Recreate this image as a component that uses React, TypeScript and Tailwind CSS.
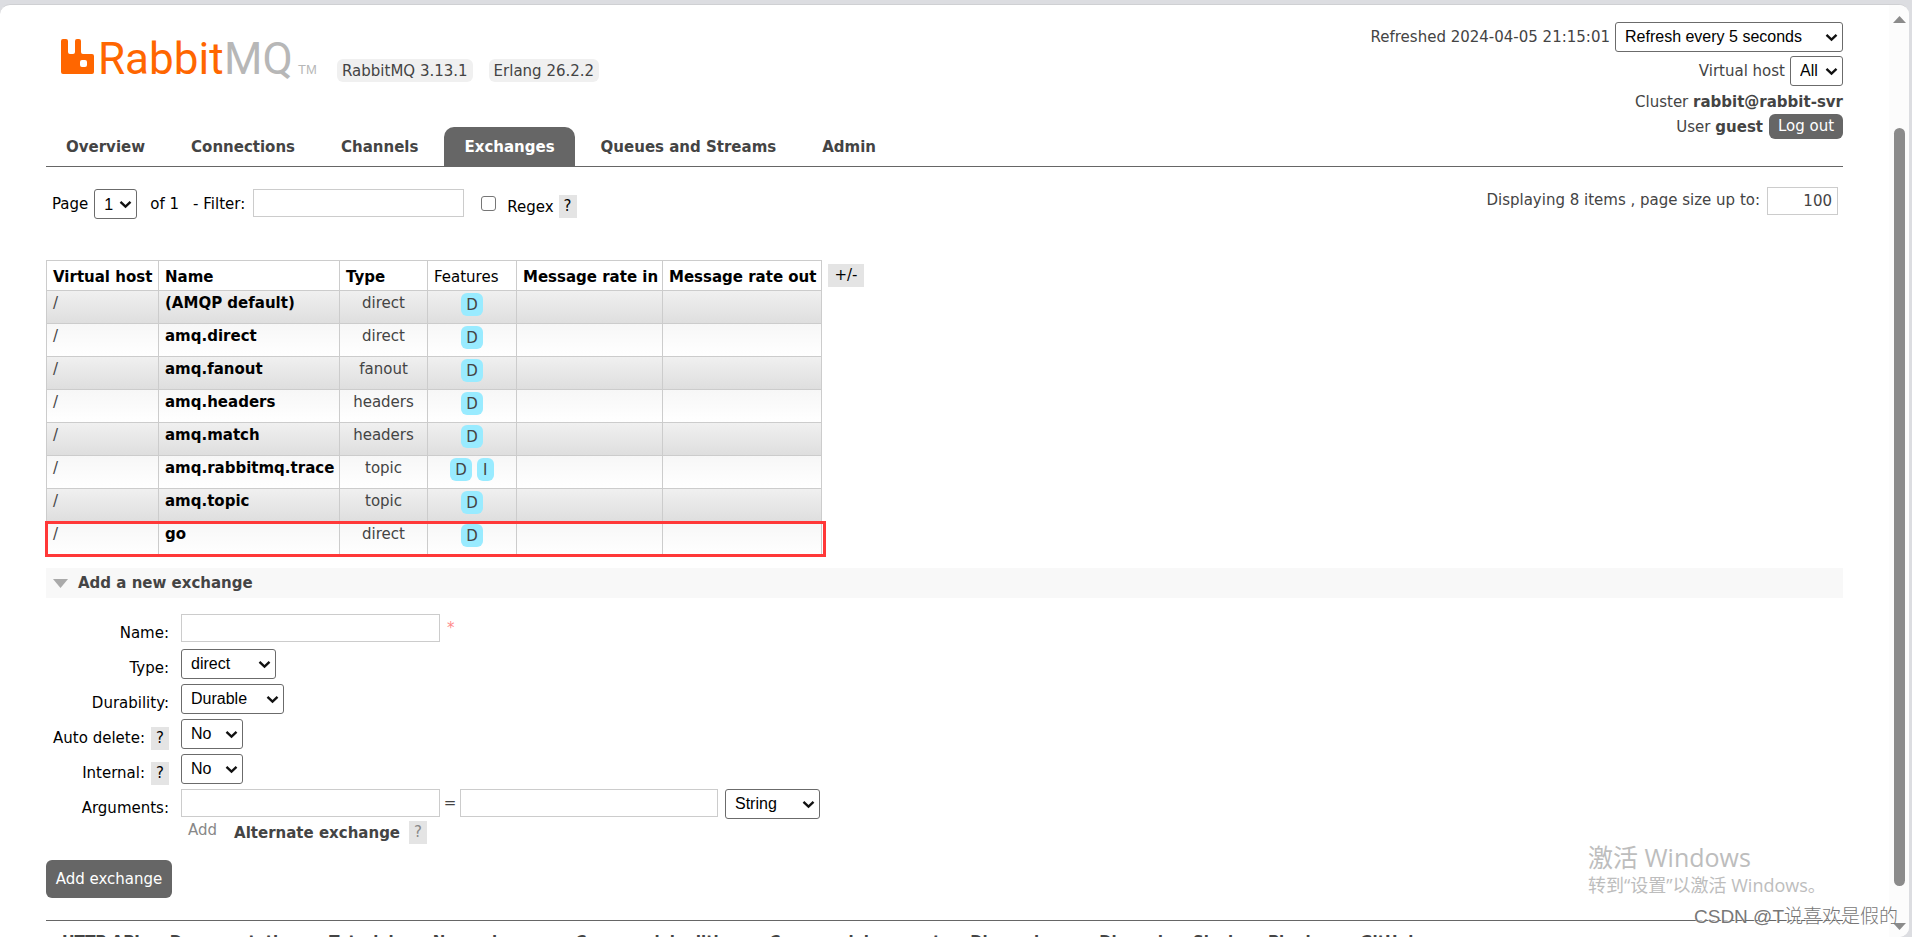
import { ComponentProps, ReactNode } from "react";

const tabs = [
  "Overview",
  "Connections",
  "Channels",
  "Exchanges",
  "Queues and Streams",
  "Admin",
];

const exchanges = [
  { name: "(AMQP default)", type: "direct", features: ["D"] },
  { name: "amq.direct", type: "direct", features: ["D"] },
  { name: "amq.fanout", type: "fanout", features: ["D"] },
  { name: "amq.headers", type: "headers", features: ["D"] },
  { name: "amq.match", type: "headers", features: ["D"] },
  { name: "amq.rabbitmq.trace", type: "topic", features: ["D", "I"] },
  { name: "amq.topic", type: "topic", features: ["D"] },
  { name: "go", type: "direct", features: ["D"] },
];

const footerLinks = [
  "HTTP API",
  "Documentation",
  "Tutorials",
  "New releases",
  "Commercial edition",
  "Commercial support",
  "Discussions",
  "Discord",
  "Slack",
  "Plugins",
  "GitHub",
];

function Logo() {
  return (
    <svg width="258" height="62" viewBox="0 0 258 62" role="img" aria-label="RabbitMQ">
      <path
        fill="#ff6600"
        fillRule="evenodd"
        d="M2 12H5Q7 12 7 14V25Q7 27 9 27H12Q14 27 14 25V14Q14 12 16 12H18Q20 12 20 14V25Q20 27 22 27H31Q33 27 33 29V45Q33 47 31 47H2Q0 47 0 45V14Q0 12 2 12ZM21 33Q19 33 19 35V38Q19 40 21 40H24Q26 40 26 38V35Q26 33 24 33Z"
      />
      <text y="47" className="font-['Liberation_Sans_Narrow','Roboto'] text-[44px]">
        <tspan x="37" fill="#ff6600">
          Rabbit
        </tspan>
        <tspan x="163" fill="#b7b7b7">
          MQ
        </tspan>
      </text>
      <text x="237" y="47" fill="#b7b7b7" className="font-['Liberation_Sans'] text-[13px]">
        TM
      </text>
    </svg>
  );
}

interface SelectProps extends ComponentProps<"select"> {
  value: string;
}

function Select({ value, className, ...props }: SelectProps) {
  return (
    <span className="relative inline-block align-middle">
      <select
        {...props}
        className={`h-[30px] appearance-none rounded-[3px] border border-[#6b6b6b] bg-white pl-[9px] font-['Liberation_Sans',sans-serif] text-[16px] text-black ${className}`}
      >
        <option>{value}</option>
      </select>
      <svg
        className="pointer-events-none absolute top-[11px] right-[5px]"
        width="13"
        height="9"
        viewBox="0 0 13 9"
        fill="none"
        stroke="#111"
        strokeWidth="2.400"
      >
        <path d="M1.500 1.800 6.500 6.500l5-4.700" />
      </svg>
    </span>
  );
}

function TextInput({ className, ...props }: ComponentProps<"input">) {
  return (
    <input
      type="text"
      {...props}
      className={`h-7 border border-[#ccc] bg-white px-[5px] ${className}`}
    />
  );
}

function Help({ className = "text-black", label }: { className?: string; label: string }) {
  return (
    <button
      aria-label={label}
      className={`h-[23px] w-[18px] bg-[#e4e4e4] text-center leading-[23px] ${className}`}
    >
      ?
    </button>
  );
}

interface FieldProps {
  id: string;
  label: string;
  help?: boolean;
  children: ReactNode;
}

function Field({ id, label, help, children }: FieldProps) {
  return (
    <div className="flex h-[35px] items-start">
      <div className="mr-3 flex w-[123px] shrink-0 items-center justify-end gap-[6px] pt-2 text-black">
        <label htmlFor={id} className="leading-[23px] whitespace-nowrap">
          {label}:
        </label>
        {help && <Help label={`Help on ${label}`} />}
      </div>
      {children}
    </div>
  );
}

function Header() {
  return (
    <header>
      <div className="flex h-[122px] justify-between">
        <div className="flex items-start pt-[22px] pl-[15px]">
          <Logo />
          <div className="ml-[18px] flex gap-4 pt-8 whitespace-nowrap">
            <span className="h-[23px] rounded-md bg-[#f0f0f0] px-[5px] leading-6">
              RabbitMQ 3.13.1
            </span>
            <span className="h-[23px] rounded-md bg-[#f0f0f0] px-[5px] leading-6">
              Erlang 26.2.2
            </span>
          </div>
        </div>
        <ul className="flex flex-col items-end pt-[17px] *:shrink-0">
          <li className="flex h-[34px] items-start gap-[5px]">
            <label htmlFor="refresh" className="leading-[30px]">
              Refreshed 2024-04-05 21:15:01
            </label>
            <Select id="refresh" value="Refresh every 5 seconds" className="w-[228px]" />
          </li>
          <li className="flex h-[34px] items-start gap-[5px]">
            <label htmlFor="vhost" className="leading-[30px]">
              Virtual host
            </label>
            <Select id="vhost" value="All" className="w-[53px]" />
          </li>
          <li className="leading-6">
            Cluster <b>rabbit@rabbit-svr</b>
          </li>
          <li className="flex gap-[6px] leading-[26px]">
            <span>
              User <b>guest</b>
            </span>
            <button className="h-[25px] w-[74px] rounded-md bg-[#666] leading-[25px] text-white">
              Log out
            </button>
          </li>
        </ul>
      </div>
      <nav className="flex gap-[6px] border-b border-[#666] font-bold">
        {tabs.map((tab) => (
          <a
            key={tab}
            href="#"
            className={
              tab === "Exchanges"
                ? "h-[39px] rounded-t-[10px] bg-[#666] px-5 leading-10 text-white"
                : "h-[39px] px-5 leading-10"
            }
          >
            {tab}
          </a>
        ))}
      </nav>
    </header>
  );
}

function FilterBar() {
  return (
    <div className="flex items-start justify-between pt-5 pr-[5px] pl-[6px]">
      <div className="flex pt-[2px] leading-[30px] text-black">
        <label htmlFor="page" className="mr-[6px]">
          Page
        </label>
        <Select id="page" value="1" className="w-[43px]" />
        <span className="ml-[13px]">of 1</span>
        <label htmlFor="filter" className="mr-2 ml-[14px]">
          - Filter:
        </label>
        <TextInput id="filter" className="w-[211px]" />
        <input
          id="regex"
          type="checkbox"
          className="mt-[7px] ml-[17px] h-[15px] w-[15px] appearance-none rounded-[3px] border border-[#767676]"
        />
        <label htmlFor="regex" className="mt-[3px] mr-[5px] ml-[11px]">
          Regex
        </label>
        <div className="pt-[6px] leading-none">
          <Help label="Help on filter" />
        </div>
      </div>
      <div className="flex gap-[7px]">
        <label htmlFor="pagesize" className="leading-[26px]">
          Displaying 8 items , page size up to:
        </label>
        <TextInput
          id="pagesize"
          defaultValue="100"
          className="w-[71px] text-right text-[#444]"
        />
      </div>
    </div>
  );
}

function ExchangeTable() {
  return (
    <div className="relative mt-[38px] flex items-start gap-[6px]">
      <table className="w-[776px] table-fixed border-collapse whitespace-nowrap">
        <colgroup>
          <col className="w-[112px]" />
          <col className="w-[181px]" />
          <col className="w-[88px]" />
          <col className="w-[89px]" />
          <col className="w-[146px]" />
          <col className="w-[159px]" />
        </colgroup>
        <thead>
          <tr className="h-[30px] text-left text-black">
            <th className="border border-[#ccc] px-[6px] pt-[2px]">Virtual host</th>
            <th className="border border-[#ccc] px-[6px] pt-[2px]">Name</th>
            <th className="border border-[#ccc] px-[6px] pt-[2px]">Type</th>
            <th className="border border-[#ccc] px-[6px] pt-[2px] font-normal">Features</th>
            <th className="border border-[#ccc] px-[6px] pt-[2px]">Message rate in</th>
            <th className="border border-[#ccc] px-[6px] pt-[2px]">Message rate out</th>
          </tr>
        </thead>
        <tbody>
          {exchanges.map((exchange, index) => (
            <tr
              key={exchange.name}
              className={
                index % 2 === 0
                  ? "h-[33px] bg-linear-to-b from-[#f0f0f0] to-[#dedede] align-top"
                  : "h-[33px] bg-linear-to-b from-[#f7f7f7] to-white align-top"
              }
            >
              <td className="border border-[#ccc] px-[6px] py-[2px]">/</td>
              <td className="border border-[#ccc] px-[6px] py-[2px]">
                <a href="#" className="font-bold text-black">
                  {exchange.name}
                </a>
              </td>
              <td className="border border-[#ccc] py-[2px] text-center">{exchange.type}</td>
              <td className="border border-[#ccc] py-[2px]">
                <div className="flex justify-center gap-[5px]">
                  {exchange.features.map((feature) => (
                    <abbr
                      key={feature}
                      className="h-[23px] min-w-[17px] rounded-md bg-[#99ebff] px-[5px] text-center leading-[25px]"
                    >
                      {feature}
                    </abbr>
                  ))}
                </div>
              </td>
              <td className="border border-[#ccc]" />
              <td className="border border-[#ccc]" />
            </tr>
          ))}
        </tbody>
      </table>
      <button className="mt-1 h-[23px] w-9 bg-[#e4e4e4] leading-[23px] text-black">+/-</button>
      <div className="absolute -bottom-[2px] -left-px h-9 w-[781px] border-[3px] border-[#ff3838]" />
    </div>
  );
}

function AddExchange() {
  return (
    <section className="mt-[13px]">
      <h2 className="flex h-[30px] items-center gap-[10px] bg-[#f8f8f8] pl-[7px] font-bold">
        <svg width="15" height="9" viewBox="0 0 15 9" fill="#aaa">
          <path d="M0 0h15L7.500 9z" />
        </svg>
        Add a new exchange
      </h2>
      <form className="pt-4" onSubmit={(e) => e.preventDefault()}>
        <Field id="name" label="Name">
          <TextInput id="name" className="w-[259px]" />
          <span className="ml-[7px] leading-7 text-[#ff8a8a]">*</span>
        </Field>
        <Field id="type" label="Type">
          <Select id="type" value="direct" className="w-[95px]" />
        </Field>
        <Field id="durability" label="Durability">
          <Select id="durability" value="Durable" className="w-[103px]" />
        </Field>
        <Field id="autodelete" label="Auto delete" help>
          <Select id="autodelete" value="No" className="w-[62px]" />
        </Field>
        <Field id="internal" label="Internal" help>
          <Select id="internal" value="No" className="w-[62px]" />
        </Field>
        <Field id="arguments" label="Arguments">
          <TextInput id="arguments" className="w-[259px]" />
          <span className="w-5 text-center leading-7">=</span>
          <TextInput aria-label="Argument value" className="mr-[7px] w-[258px]" />
          <Select aria-label="Argument type" value="String" className="w-[95px]" />
        </Field>
        <div className="-mt-1 flex h-6 items-start pl-[142px]">
          <span className="leading-5 text-[#888]">Add</span>
          <b className="mr-[9px] ml-[17px] leading-[26px]">Alternate exchange</b>
          <Help label="Help on alternate exchange" className="mt-px text-[#888]" />
        </div>
        <button className="mt-4 h-[38px] w-[126px] rounded-md bg-[#666] text-white">
          Add exchange
        </button>
      </form>
    </section>
  );
}

function Scrollbar() {
  return (
    <div className="flex w-5 shrink-0 flex-col items-center bg-[#fcfcfc] pt-[11px] pb-[7px]">
      <svg width="13" height="7" viewBox="0 0 13 7" fill="#8b8b8b">
        <path d="M6.500 0 13 7H0z" />
      </svg>
      <div className="mt-[105px] mb-[37px] w-[11px] flex-1 rounded-full bg-[#8b8b8b]" />
      <svg width="13" height="7" viewBox="0 0 13 7" fill="#8b8b8b">
        <path d="M0 0h13L6.500 7z" />
      </svg>
    </div>
  );
}

export default function App() {
  return (
    <div className="relative h-screen overflow-hidden bg-[#dcdde1] pt-1 pr-[3px] font-['DejaVu_Sans',sans-serif] text-[15px] leading-5 text-[#444]">
      <div className="flex h-full overflow-hidden rounded-t-[10px] rounded-br-[10px] border-t border-[#cfd0d3] bg-white">
        <div className="min-w-0 flex-1 pr-[46px] pl-[46px]">
          <Header />
          <main>
            <FilterBar />
            <ExchangeTable />
            <AddExchange />
          </main>
          <footer className="mt-[22px] border-t border-[#666] pt-[11px] pl-4">
            <ul className="flex gap-[30px] font-bold whitespace-nowrap">
              {footerLinks.map((link) => (
                <li key={link}>
                  <a href="#">{link}</a>
                </li>
              ))}
            </ul>
          </footer>
        </div>
        <Scrollbar />
      </div>
      <div className="pointer-events-none absolute right-[90px] bottom-[41px] w-[234px] font-['Open_Sans','Noto_Sans_CJK_SC',sans-serif] whitespace-nowrap text-[#bdbdbd]">
        <p className="text-[25px] leading-[34px]">激活 Windows</p>
        <p className="text-[18px] leading-[22px]">转到“设置”以激活 Windows。</p>
      </div>
      <p className="pointer-events-none absolute right-[14px] bottom-[6px] font-['Liberation_Sans','Noto_Sans_CJK_SC',sans-serif] text-[19px] leading-7 font-light text-[#777] [text-shadow:-1px_-1px_0_#fff]">
        CSDN @T说喜欢是假的
      </p>
    </div>
  );
}
